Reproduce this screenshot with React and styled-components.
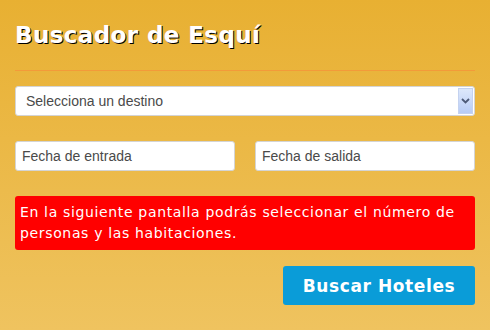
import React from 'react';
import styled, { createGlobalStyle } from 'styled-components';

const GlobalStyle = createGlobalStyle`
    html, body {
        margin: 0;
        padding: 0;
    }
    body {
        width: 490px;
        height: 330px;
        overflow: hidden;
    }
`;

const StyledPage = styled.div`
    box-sizing: border-box;
    width: 490px;
    height: 330px;
    padding: 22px 15px 0;
    background: linear-gradient(to bottom, #e8b032 0%, #efc35f 100%);
    font-family: "DejaVu Sans", Verdana, sans-serif;
`;

const StyledTitle = styled.h1`
    margin: 0;
    height: 26px;
    line-height: 26px;
    font-size: 23px;
    font-weight: bold;
    letter-spacing: 0.4px;
    color: #fff;
    text-shadow: 1px 1px 0 #000;
`;

const StyledRule = styled.div`
    height: 1px;
    margin: 22px 0 15px;
    background: #f39a3a;
`;

const StyledSelect = styled.div`
    box-sizing: border-box;
    display: flex;
    align-items: center;
    height: 30px;
    padding: 0 1px 0 10px;
    background: #fff;
    border: 1px solid #d4d4d4;
    border-radius: 3px;
    font-family: "Liberation Sans", Arial, sans-serif;
    font-size: 14px;
    color: #4a4a4a;
`;

const StyledSelectText = styled.span`
    flex: 1;
`;

const StyledArrow = styled.span`
    display: flex;
    align-items: center;
    justify-content: center;
    width: 15px;
    height: 26px;
    background: linear-gradient(to bottom, #dde8fb, #b8ccf6);
    border: 1px solid #c4d2f0;
    box-sizing: border-box;
`;

const StyledDates = styled.div`
    display: flex;
    gap: 20px;
    margin-top: 25px;
`;

const StyledInput = styled.div`
    box-sizing: border-box;
    flex: 1;
    height: 30px;
    display: flex;
    align-items: center;
    padding: 0 6px;
    background: #fff;
    border: 1px solid #d4d4d4;
    border-radius: 3px;
    font-family: "Liberation Sans", Arial, sans-serif;
    font-size: 14px;
    color: #4a4a4a;
`;

const StyledNotice = styled.div`
    box-sizing: border-box;
    margin-top: 25px;
    padding: 6px 5px;
    background: #ff0000;
    border-radius: 3px;
    color: #fff;
    font-size: 14px;
    line-height: 21px;
    letter-spacing: 0.65px;
`;

const StyledActions = styled.div`
    display: flex;
    justify-content: flex-end;
    margin-top: 16px;
`;

const StyledButton = styled.button`
    width: 192px;
    height: 39px;
    border: 0;
    border-radius: 3px;
    background: #0a9cd8;
    color: #fff;
    font-family: "DejaVu Sans", Verdana, sans-serif;
    font-size: 17px;
    font-weight: bold;
    letter-spacing: 0.6px;
    cursor: pointer;
`;

const App = () => (
    <>
        <GlobalStyle />
        <StyledPage>
            <StyledTitle>Buscador de Esquí</StyledTitle>
            <StyledRule />
            <StyledSelect>
                <StyledSelectText>Selecciona un destino</StyledSelectText>
                <StyledArrow>
                    <svg width="9" height="6" viewBox="0 0 9 6">
                        <path d="M1 1 L4.5 4.5 L8 1" fill="none" stroke="#4d5a78" strokeWidth="1.8" />
                    </svg>
                </StyledArrow>
            </StyledSelect>
            <StyledDates>
                <StyledInput>Fecha de entrada</StyledInput>
                <StyledInput>Fecha de salida</StyledInput>
            </StyledDates>
            <StyledNotice>
                En la siguiente pantalla podrás seleccionar el número de personas y las habitaciones.
            </StyledNotice>
            <StyledActions>
                <StyledButton>Buscar Hoteles</StyledButton>
            </StyledActions>
        </StyledPage>
    </>
);

export default App;
